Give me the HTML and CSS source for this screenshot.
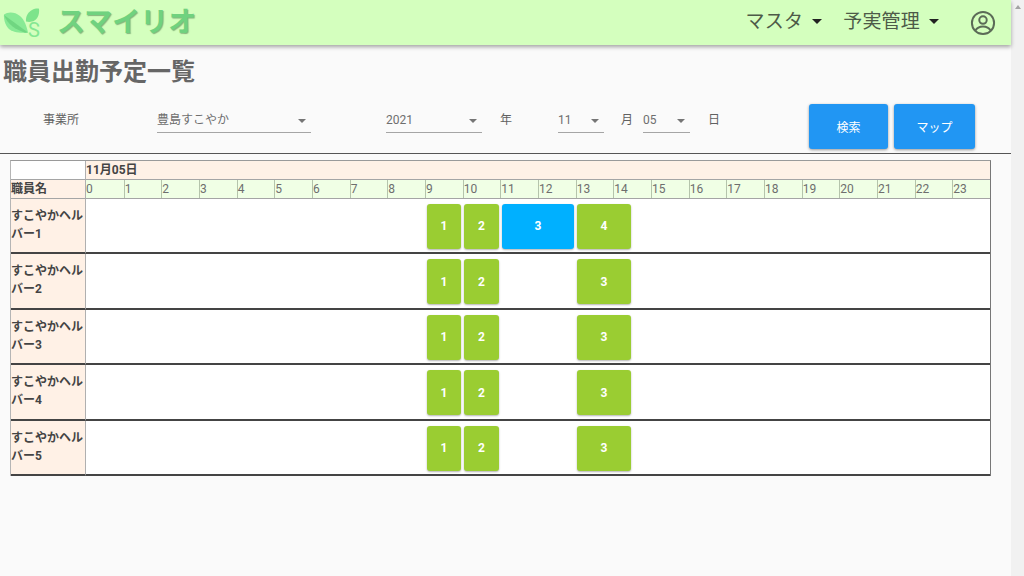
FILE: index.html
```html
<!DOCTYPE html>
<html lang="ja">
<head>
<meta charset="utf-8">
<title>職員出勤予定一覧</title>
<link rel="stylesheet" href="styles.css">
</head>
<body>
<div class="page">
  <main class="main">
    <header class="topbar">
      <div class="brand">
        <span class="logo">
          <svg class="leaf" width="40" height="30" viewBox="0 0 40 30">
            <path d="M1 10.500C5 7.500 12 7.800 17 12C21.500 16 23.500 22 25 28.500C18 29.500 9 28.500 5 24C2 20.500 .5 14.500 1 10.500Z" fill="#88ea95"/>
            <path d="M1 11L25 28.500L22 28.800C12 25 5 21 1 11Z" fill="#70d681"/>
            <path d="M23 17.500C22.500 13 24.500 8.500 29 6C31.500 4.700 34.500 4.300 36 4.800C36.500 9 35.500 14 31.500 16.500C29 18 26 18.300 23 17.500Z" fill="#7de48b"/>
          </svg>
          <span class="logo-s">S</span>
        </span>
        <span class="brand-name">スマイリオ</span>
      </div>
      <nav class="nav">
        <span class="nav-item nav-first">マスタ<i class="caret"></i></span>
        <span class="nav-item">予実管理<i class="caret"></i></span>
        <svg class="account" width="28" height="28" viewBox="0 0 24 24" fill="none" stroke="#5b6b57" stroke-width="1.700">
          <circle cx="12" cy="12" r="9.500"/>
          <circle cx="12" cy="9.500" r="3.200"/>
          <path d="M5.500 18.500C7 15.800 9.500 15 12 15C14.500 15 17 15.800 18.500 18.500"/>
        </svg>
      </nav>
    </header>

    <h1 class="title">職員出勤予定一覧</h1>

    <form class="filters">
      <span class="label label-office">事業所</span>
      <span class="select select-office">豊島すこやか<i class="arrow"></i></span>
      <span class="select select-year">2021<i class="arrow"></i></span>
      <span class="label label-year">年</span>
      <span class="select select-month">11<i class="arrow"></i></span>
      <span class="label label-month">月</span>
      <span class="select select-day">05<i class="arrow"></i></span>
      <span class="label label-day">日</span>
      <button type="button" class="btn btn-search">検索</button>
      <button type="button" class="btn btn-map">マップ</button>
    </form>

    <div class="rule"></div>

    <section class="schedule">
      <div class="row-date">
        <div class="corner"></div>
        <div class="date">11月05日</div>
      </div>
      <div class="row-hours">
        <div class="name-head">職員名</div>
        <div class="hours">
          <span>0</span><span>1</span><span>2</span><span>3</span><span>4</span><span>5</span>
          <span>6</span><span>7</span><span>8</span><span>9</span><span>10</span><span>11</span>
          <span>12</span><span>13</span><span>14</span><span>15</span><span>16</span><span>17</span>
          <span>18</span><span>19</span><span>20</span><span>21</span><span>22</span><span>23</span>
        </div>
      </div>
      <div class="row">
        <div class="staff">すこやかヘルバー1</div>
        <div class="timeline">
          <span class="chip w1">1</span><span class="chip w2">2</span><span class="chip w3 blue">3</span><span class="chip w4">4</span>
        </div>
      </div>
      <div class="row">
        <div class="staff">すこやかヘルバー2</div>
        <div class="timeline">
          <span class="chip w1">1</span><span class="chip w2">2</span><span class="gap-slot"></span><span class="chip w4">3</span>
        </div>
      </div>
      <div class="row">
        <div class="staff">すこやかヘルバー3</div>
        <div class="timeline">
          <span class="chip w1">1</span><span class="chip w2">2</span><span class="gap-slot"></span><span class="chip w4">3</span>
        </div>
      </div>
      <div class="row">
        <div class="staff">すこやかヘルバー4</div>
        <div class="timeline">
          <span class="chip w1">1</span><span class="chip w2">2</span><span class="gap-slot"></span><span class="chip w4">3</span>
        </div>
      </div>
      <div class="row">
        <div class="staff">すこやかヘルバー5</div>
        <div class="timeline">
          <span class="chip w1">1</span><span class="chip w2">2</span><span class="gap-slot"></span><span class="chip w4">3</span>
        </div>
      </div>
    </section>
  </main>
  <aside class="scrollbar"><i class="scroll-up"></i></aside>
</div>
</body>
</html>
```
FILE: styles.css
```css
* { box-sizing: border-box; }
html, body { margin: 0; height: 100%; overflow: hidden; }
body {
  font-family: Roboto, "Noto Sans CJK JP", sans-serif;
  background: #fafafa;
  color: #616161;
}
.page { display: flex; width: 1024px; height: 576px; }
.main { width: 1011px; flex: none; }
.scrollbar { width: 13px; flex: none; background: #f1f1f1; display: flex; justify-content: center; padding-top: 5px; }
.scroll-up { width: 0; height: 0; border-left: 3.500px solid transparent; border-right: 3.500px solid transparent; border-bottom: 4px solid #a3a3a3; }

.topbar {
  height: 45px;
  background: #d4ffbe;
  box-shadow: 0 2px 4px rgba(0,0,0,.35);
  display: flex;
  justify-content: space-between;
  align-items: center;
  position: relative;
}
.brand { display: flex; align-items: center; padding-left: 3px; }
.logo { position: relative; width: 40px; height: 38px; display: block; }
.leaf { position: absolute; left: 0; top: 0; }
.logo-s { position: absolute; left: 25px; top: 15px; font-size: 20px; line-height: 22px; color: #84e892; font-family: Roboto, sans-serif; }
.brand-name {
  margin-left: 14px;
  font-size: 28px;
  line-height: 38px;
  font-weight: 700;
  color: #70d27f;
  text-shadow: 1px 1px 1px rgba(70,120,70,.55);
}
.nav { display: flex; align-items: center; height: 45px; padding-right: 14px; }
.nav-item { display: flex; align-items: center; font-size: 19px; color: #4d5a48; margin-right: 19px; letter-spacing: 0.200px; position: relative; top: -3px; }
.nav-first { margin-right: 21px; }
.caret { width: 0; height: 0; margin-left: 9px; margin-top: 3px; border-left: 5.500px solid transparent; border-right: 5.500px solid transparent; border-top: 5.500px solid #222; }
.account { margin-left: 11px; }

.title { margin: 11px 0 0 3px; font-size: 24px; line-height: 32px; font-weight: 700; color: #666; }

.filters { position: relative; height: 48px; margin-top: 17px; display: flex; align-items: flex-start; font-size: 12px; }
.label { line-height: 20px; margin-top: 5px; color: #616161; }
.select { position: relative; display: block; margin-top: 5px; height: 23px; line-height: 20px; border-bottom: 1px solid #a5a5a5; color: #6e6e6e; }
.arrow { position: absolute; right: 5px; top: 9px; width: 0; height: 0; border-left: 4px solid transparent; border-right: 4px solid transparent; border-top: 4px solid #757575; }
.label-office { margin-left: 43px; width: 114px; }
.select-office { width: 154px; }
.select-year { margin-left: 75px; width: 96px; }
.label-year { margin-left: 18px; width: 58px; }
.select-month { width: 46px; }
.label-month { margin-left: 17px; width: 22px; }
.select-day { width: 47px; }
.label-day { margin-left: 18px; width: 101px; }
.btn {
  height: 45px;
  border: 0;
  border-radius: 3px;
  background: #2196f3;
  color: #fff;
  font: inherit;
  box-shadow: 0 1px 3px rgba(0,0,0,.4);
  margin-top: -1px;
}
.btn-search { width: 79px; }
.btn-map { width: 81px; margin-left: 6px; }

.rule { height: 1px; background: #555; }

.schedule { width: 981px; margin: 6px 0 0 10px; border: 1px solid #777; border-top: 1px solid #9a9a9a; border-left: 1px solid #b5b5b5; border-bottom: 0; font-size: 12px; }
.row-date, .row-hours, .row { display: flex; }
.corner { width: 75px; height: 19px; background: #fff; border-right: 1px solid #b0b0b0; border-bottom: 1px solid #a5a5a5; flex: none; }
.date { flex: 1; height: 19px; line-height: 18px; background: #fff1e6; border-bottom: 1px solid #a5a5a5; font-weight: 700; color: #444; }
.name-head { width: 75px; height: 18.500px; line-height: 18px; background: #fff1e6; border-right: 1px solid #b0b0b0; border-bottom: 1px solid #a5a5a5; font-weight: 700; color: #444; flex: none; }
.hours { flex: 1; display: grid; grid-template-columns: repeat(24, 1fr); height: 18.500px; background: #f0ffe5; border-bottom: 1px solid #a5a5a5; }
.hours span { line-height: 18px; border-left: 1px solid #b5c4ac; color: #6e6e6e; }
.hours span:first-child { border-left: 0; }
.row { height: 55.500px; }
.staff { width: 75px; flex: none; padding-top: 8px; line-height: 18px; background: #fff1e6; border-right: 1px solid #b0b0b0; border-bottom: 2px solid #444; font-weight: 700; color: #444; }
.timeline { flex: 1; display: flex; gap: 3px; align-items: flex-start; padding: 5px 0 0 341px; background: #fff; border-bottom: 2px solid #444; }
.chip {
  height: 45px;
  display: flex;
  align-items: center;
  justify-content: center;
  border-radius: 3px;
  background: #9acd32;
  color: #fff;
  font-weight: 700;
  box-shadow: 0 1px 2px rgba(0,0,0,.3);
}
.blue { background: #00b0ff; }
.w1 { width: 34px; }
.w2 { width: 35px; }
.w3 { width: 72px; }
.w4 { width: 54px; }
.gap-slot { width: 72px; }
```
